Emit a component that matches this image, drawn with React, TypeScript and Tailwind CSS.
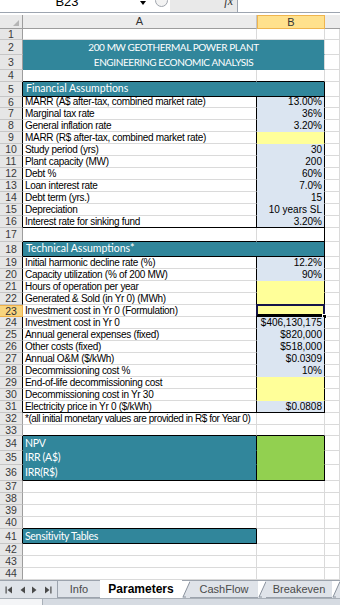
import React from "react";

type RowDef = {
  n: number;
  h: string;
  hd?: string;
  a?: string;
  b?: string;
  c?: string;
  at?: React.ReactNode;
  bt?: React.ReactNode;
  merge?: string;
  mt?: React.ReactNode;
  sel?: boolean;
};

const GRID = "border-b-[#dadada] border-r-[#dadada]";
const HD = "bg-[#e6e6e6] border-b-[#c6c6c6] border-r-[#9d9d9d] text-[#3a3a3a]";
const HD_BOX = "bg-[#e6e6e6] border-b-[#c6c6c6] border-r-black text-[#3a3a3a]";
const HD_SEL = "bg-[#f8d47e] border-t border-t-[#eeb04a] border-b-[#eeb04a] border-r-[#eeb04a] text-[#333]";
const A_BODY = "border-b-[#dadada] border-r-black";
const B_BODY = "bg-[#dbe5f1] border-b-[#dbe5f1] border-r-black";
const B_YEL = "bg-[#ffff99] border-b-[#ffff99] border-r-black";
const TEAL_HEAD = "bg-[#31869b] border-b-black border-r-black justify-start pl-[3px]";

const TXT = "font-['Liberation_Sans',sans-serif] text-[10px] tracking-[-0.3px] text-black";
const NUM = "font-['Liberation_Sans_Narrow','Liberation_Sans',sans-serif] text-[10px] text-black";
const LBL = "font-['Lato',sans-serif] text-[10.5px] text-white";
const TITLE = "font-['Lato',sans-serif] text-[10px] tracking-[-0.4px] text-white";

const Label = ({ children }: { children: React.ReactNode }) => (
  <span className={LBL}>{children}</span>
);

const rows: RowDef[] = [
  { n: 1, h: "h-[11px]" },
  {
    n: 2,
    h: "h-[15px]",
    merge: "bg-[#31869b] border-b-[#31869b] border-r-[#dadada] justify-center",
    mt: <span className={TITLE}>200 MW GEOTHERMAL POWER PLANT</span>,
  },
  {
    n: 3,
    h: "h-[15px]",
    merge: "bg-[#31869b] border-b-[#31869b] border-r-[#dadada] justify-center",
    mt: <span className={TITLE}>ENGINEERING ECONOMIC ANALYSIS</span>,
  },
  { n: 4, h: "h-[12px]", a: "border-b-black border-r-[#dadada]", b: "border-b-black border-r-[#dadada]" },
  { n: 5, h: "h-[15px]", hd: HD_BOX, merge: TEAL_HEAD, mt: <Label>Financial Assumptions</Label> },
  { n: 6, h: "h-[11px]", hd: HD_BOX, a: A_BODY, b: B_BODY, at: "MARR (A$ after-tax, combined market rate)", bt: "13.00%" },
  { n: 7, h: "h-[12px]", hd: HD_BOX, a: A_BODY, b: B_BODY, at: "Marginal tax rate", bt: "36%" },
  { n: 8, h: "h-[12px]", hd: HD_BOX, a: A_BODY, b: B_BODY, at: "General inflation rate", bt: "3.20%" },
  { n: 9, h: "h-[12px]", hd: HD_BOX, a: A_BODY, b: B_YEL, at: "MARR (R$ after-tax, combined market rate)" },
  { n: 10, h: "h-[12px]", hd: HD_BOX, a: A_BODY, b: B_BODY, at: "Study period (yrs)", bt: "30" },
  { n: 11, h: "h-[12px]", hd: HD_BOX, a: A_BODY, b: B_BODY, at: "Plant capacity (MW)", bt: "200" },
  { n: 12, h: "h-[12px]", hd: HD_BOX, a: A_BODY, b: B_BODY, at: "Debt %", bt: "60%" },
  { n: 13, h: "h-[12px]", hd: HD_BOX, a: A_BODY, b: B_BODY, at: "Loan interest rate", bt: "7.0%" },
  { n: 14, h: "h-[12px]", hd: HD_BOX, a: A_BODY, b: B_BODY, at: "Debt term (yrs.)", bt: "15" },
  { n: 15, h: "h-[12px]", hd: HD_BOX, a: A_BODY, b: B_BODY, at: "Depreciation", bt: "10 years SL" },
  {
    n: 16,
    h: "h-[12px]",
    hd: HD_BOX,
    a: "border-b-black border-r-black",
    b: "bg-[#dbe5f1] border-b-black border-r-black",
    at: "Interest rate for sinking fund",
    bt: "3.20%",
  },
  { n: 17, h: "h-[14px]", a: "border-b-black border-r-[#dadada]", b: "border-b-black border-r-black" },
  { n: 18, h: "h-[15px]", hd: HD_BOX, merge: TEAL_HEAD, mt: <Label>Technical Assumptions*</Label> },
  { n: 19, h: "h-[12px]", hd: HD_BOX, a: A_BODY, b: B_BODY, at: "Initial harmonic decline rate (%)", bt: "12.2%" },
  { n: 20, h: "h-[12px]", hd: HD_BOX, a: A_BODY, b: B_BODY, at: "Capacity utilization (% of 200 MW)", bt: "90%" },
  { n: 21, h: "h-[12px]", hd: HD_BOX, a: A_BODY, b: B_YEL, at: "Hours of operation per year" },
  { n: 22, h: "h-[12px]", hd: HD_BOX, a: A_BODY, b: B_YEL, at: "Generated & Sold (in Yr 0) (MWh)" },
  { n: 23, h: "h-[12px]", hd: HD_SEL, a: A_BODY, b: B_YEL, at: "Investment cost in Yr 0 (Formulation)", sel: true },
  { n: 24, h: "h-[12px]", hd: HD_BOX, a: A_BODY, b: B_BODY, at: "Investment cost in Yr 0", bt: "$406,130,175" },
  { n: 25, h: "h-[12px]", hd: HD_BOX, a: A_BODY, b: B_BODY, at: "Annual general expenses (fixed)", bt: "$820,000" },
  { n: 26, h: "h-[12px]", hd: HD_BOX, a: A_BODY, b: B_BODY, at: "Other costs (fixed)", bt: "$518,000" },
  { n: 27, h: "h-[12px]", hd: HD_BOX, a: A_BODY, b: B_BODY, at: "Annual O&M  ($/kWh)", bt: "$0.0309" },
  { n: 28, h: "h-[12px]", hd: HD_BOX, a: A_BODY, b: B_BODY, at: "Decommissioning cost %", bt: "10%" },
  { n: 29, h: "h-[12px]", hd: HD_BOX, a: A_BODY, b: B_YEL, at: "End-of-life decommissioning cost" },
  { n: 30, h: "h-[12px]", hd: HD_BOX, a: A_BODY, b: B_YEL, at: "Decommissioning cost in Yr 30" },
  {
    n: 31,
    h: "h-[12px]",
    hd: HD_BOX,
    a: "border-b-black border-r-black",
    b: "bg-[#dbe5f1] border-b-black border-r-black",
    at: "Electricity price in Yr 0 ($/kWh)",
    bt: "$0.0808",
  },
  {
    n: 32,
    h: "h-[12px]",
    at: <span className="tracking-[-0.45px]">*(all initial monetary values are provided in R$ for Year 0)</span>,
  },
  { n: 33, h: "h-[11px]", a: "border-b-black border-r-[#dadada]", b: "border-b-black border-r-[#dadada]" },
  {
    n: 34,
    h: "h-[15px]",
    hd: HD_BOX,
    a: "bg-[#31869b] border-b-[#31869b] border-r-black",
    b: "bg-[#92d050] border-b-[#92d050] border-r-black",
    at: <Label>NPV</Label>,
  },
  {
    n: 35,
    h: "h-[14px]",
    hd: HD_BOX,
    a: "bg-[#31869b] border-b-[#31869b] border-r-black",
    b: "bg-[#92d050] border-b-[#92d050] border-r-black",
    at: <Label>IRR (A$)</Label>,
  },
  {
    n: 36,
    h: "h-[16px]",
    hd: HD_BOX,
    a: "bg-[#31869b] border-b-black border-r-black",
    b: "bg-[#92d050] border-b-black border-r-black",
    at: <Label>IRR(R$)</Label>,
  },
  { n: 37, h: "h-[12px]" },
  { n: 38, h: "h-[12px]" },
  { n: 39, h: "h-[12px]" },
  { n: 40, h: "h-[12px]", a: "border-b-black border-r-[#dadada]" },
  { n: 41, h: "h-[15px]", hd: HD_BOX, a: "bg-[#31869b] border-b-black border-r-black", at: <Label>Sensitivity Tables</Label> },
  { n: 42, h: "h-[12px]" },
  { n: 43, h: "h-[12px]" },
  { n: 44, h: "h-[12px]" },
];

function Row({ r }: { r: RowDef }) {
  return (
    <div className={`flex ${r.h}`}>
      <div
        className={`w-[23px] shrink-0 flex items-center justify-center border-b border-r font-['Liberation_Sans',sans-serif] text-[10.5px] leading-none ${r.hd ?? HD}`}
      >
        {r.n}
      </div>
      {r.merge !== undefined ? (
        <div className={`w-[302px] shrink-0 flex items-center border-b border-r whitespace-nowrap ${r.merge}`}>{r.mt}</div>
      ) : (
        <>
          <div
            className={`w-[234px] shrink-0 flex items-center border-b border-r pl-[2px] whitespace-nowrap leading-none ${TXT} ${r.a ?? GRID}`}
          >
            {r.at}
          </div>
          <div
            className={`relative w-[68px] shrink-0 flex items-center justify-end border-b border-r pr-[2px] whitespace-nowrap leading-none ${NUM} ${r.b ?? GRID}`}
          >
            {r.bt}
            {r.sel && (
              <>
                <div className="absolute -left-[1px] -top-[1px] w-[69px] h-[13px] border-2 border-[#14144a] border-b-[3px] border-b-black" />
                <div className="absolute -right-[3px] -bottom-[3px] w-[5px] h-[5px] bg-black border border-white" />
              </>
            )}
          </div>
        </>
      )}
      <div className={`flex-1 border-b border-r ${r.c ?? GRID}`} />
    </div>
  );
}

const Arrow = ({ dir, bar }: { dir: "l" | "r"; bar?: boolean }) => (
  <svg width="8" height="8" viewBox="0 0 8 8">
    {dir === "l" ? <polygon points="7,0.5 7,7.5 2.5,4" fill="#4a4a4a" /> : <polygon points="1,0.5 1,7.5 5.5,4" fill="#4a4a4a" />}
    {bar && (dir === "l" ? <rect x="0.5" y="0.5" width="1.2" height="7" fill="#4a4a4a" /> : <rect x="6.3" y="0.5" width="1.2" height="7" fill="#4a4a4a" />)}
  </svg>
);

const Slant = () => (
  <svg width="8" height="17" viewBox="0 0 8 17" className="shrink-0">
    <polygon points="0,0 8,0 8,17 0,17" fill="#dfe3e9" />
    <polygon points="0,0 8,0 1,16 0,16" fill="#ffffff" />
    <line x1="1" y1="16" x2="8" y2="0.5" stroke="#8b939e" strokeWidth="1" />
    <line x1="1" y1="16" x2="4" y2="16" stroke="#8b939e" strokeWidth="1" />
  </svg>
);

export default function App() {
  return (
    <div className="w-[340px] h-[605px] overflow-hidden bg-white select-none">
      {/* formula bar */}
      <div className="flex h-[13px] border-b border-[#9da5b0] bg-white overflow-hidden">
        <div className="w-[134px] flex justify-center overflow-hidden">
          <span className="-mt-[5px] h-fit font-['Liberation_Sans',sans-serif] text-[13px] leading-none text-black">B23</span>
        </div>
        <div className="w-[18px] flex justify-center pt-[1px]">
          <div className="w-0 h-0 border-l-[3px] border-r-[3px] border-t-[4px] border-l-transparent border-r-transparent border-t-black" />
        </div>
        <div className="w-[18px] flex justify-center overflow-hidden">
          <div className="w-[13px] h-[13px] -mt-[6px] shrink-0 rounded-full border border-[#a0a5ad] bg-[#f3f3f3]" />
        </div>
        <div className="w-[67px] flex justify-end pr-[4px] bg-[#e9e9e9] overflow-hidden">
          <span className="-mt-[5px] h-fit font-['Liberation_Serif',serif] italic text-[12px] leading-none text-[#333]">fx</span>
        </div>
        <div className="flex-1 border-l border-[#9da5b0] bg-white" />
      </div>
      <div className="h-[2px] bg-white" />

      {/* column headers */}
      <div className="flex h-[14px] font-['Liberation_Sans',sans-serif] text-[11px] leading-none text-[#333]">
        <div className="relative w-[23px] shrink-0 bg-[#e9e9e9] border-b border-r border-b-[#9d9d9d] border-r-[#9d9d9d]">
          <svg width="6" height="6" viewBox="0 0 6 6" className="absolute right-[3px] bottom-[2px]">
            <polygon points="6,0 6,6 0,6" fill="#b5b5b5" />
          </svg>
        </div>
        <div className="w-[234px] shrink-0 flex items-center justify-center bg-[#ececec] border-b border-r border-b-[#9d9d9d] border-r-[#c6c6c6]">
          A
        </div>
        <div className="w-[68px] shrink-0 flex items-center justify-center bg-[#ffe18d] border border-[#efb54e]">B</div>
        <div className="flex-1 bg-[#ececec] border-b border-b-[#9d9d9d]" />
      </div>

      {rows.map((r) => (
        <Row key={r.n} r={r} />
      ))}

      {/* sheet tabs */}
      <div className="flex h-[18px] bg-[#dfe3e9] border-t border-[#9ca3ad] font-['Liberation_Sans',sans-serif] leading-none">
        <div className="w-[58px] shrink-0 flex items-center justify-around px-[2px] border-r border-[#9ca3ad]">
          <Arrow dir="l" bar />
          <Arrow dir="l" />
          <Arrow dir="r" />
          <Arrow dir="r" bar />
        </div>
        <div className="w-[42px] shrink-0 flex items-center justify-center text-[11px] text-[#4a4a4a] border-b border-[#9ca3ad]">
          Info
        </div>
        <div className="w-[82px] shrink-0 flex items-center justify-center bg-white text-[12px] font-bold text-black -mt-px">
          Parameters
        </div>
        <Slant />
        <div className="w-[68px] shrink-0 flex items-center justify-center text-[11px] text-[#4a4a4a] border-b border-[#9ca3ad]">
          CashFlow
        </div>
        <Slant />
        <div className="w-[66px] shrink-0 flex items-center justify-center text-[11px] text-[#4a4a4a] border-b border-[#9ca3ad]">
          Breakeven
        </div>
        <Slant />
      </div>

      {/* status bar */}
      <div className="flex h-[8px] bg-[#d6dbe2]">
        <div className="w-[43px] bg-[#f4f5f7] border-r border-t border-[#a9b0b8]" />
        <div className="flex-1 border-t border-[#a9b0b8]" />
      </div>
    </div>
  );
}
